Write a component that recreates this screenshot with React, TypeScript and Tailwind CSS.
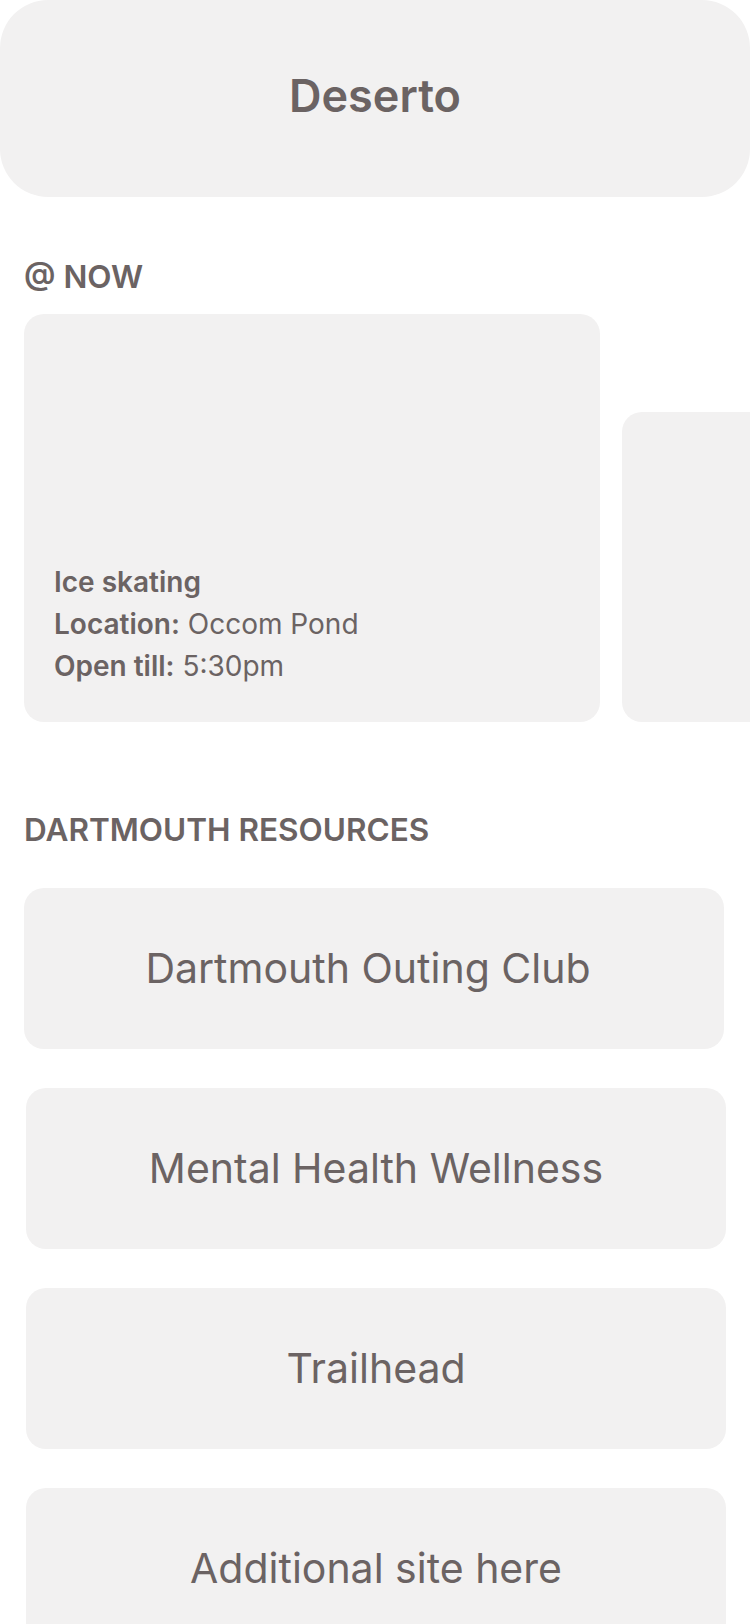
const resources = [
  { label: 'Dartmouth Outing Club', box: 'ml-[24px]', text: 'pr-[12px]' },
  { label: 'Mental Health Wellness', box: 'ml-[26px]', text: '' },
  { label: 'Trailhead', box: 'ml-[26px]', text: '' },
  { label: 'Additional site here', box: 'ml-[26px]', text: '' },
];

function SectionTitle({ children, className }: { children: React.ReactNode; className?: string }) {
  return (
    <h2 className={`px-[24px] text-[31.5px] leading-[36px] font-semibold ${className ?? ''}`}>
      {children}
    </h2>
  );
}

export default function App() {
  return (
    <div
      className="w-[750px] h-[1624px] overflow-hidden bg-white text-[#6b6363]"
      style={{ fontFamily: 'Inter, "Noto Sans", sans-serif' }}
    >
      <header className="h-[197px] rounded-[48px] bg-[#f2f1f1] flex items-center justify-center pb-[6px]">
        <h1 className="text-[45px] font-semibold leading-none">Deserto</h1>
      </header>

      <SectionTitle className="mt-[62px]">@ NOW</SectionTitle>

      <div className="mt-[19px] flex items-end gap-[22px] pl-[24px] overflow-hidden">
        <div className="w-[576px] h-[408px] shrink-0 rounded-[20px] bg-[#f2f1f1] flex flex-col justify-end px-[30px] pb-[35px] text-[28px] leading-[42px]">
          <p className="font-semibold">Ice skating</p>
          <p>
            <span className="font-semibold">Location:</span> Occom Pond
          </p>
          <p>
            <span className="font-semibold">Open till:</span> 5:30pm
          </p>
        </div>
        <div className="w-[576px] h-[310px] shrink-0 rounded-[20px] bg-[#f2f1f1]" />
      </div>

      <SectionTitle className="mt-[90px]">DARTMOUTH RESOURCES</SectionTitle>

      <div className="mt-[40px] flex flex-col gap-[39px]">
        {resources.map((r) => (
          <a
            key={r.label}
            className={`w-[700px] h-[161px] shrink-0 rounded-[20px] bg-[#f2f1f1] flex items-center justify-center ${r.box}`}
          >
            <span className={`text-[41px] leading-none ${r.text}`}>{r.label}</span>
          </a>
        ))}
      </div>
    </div>
  );
}
